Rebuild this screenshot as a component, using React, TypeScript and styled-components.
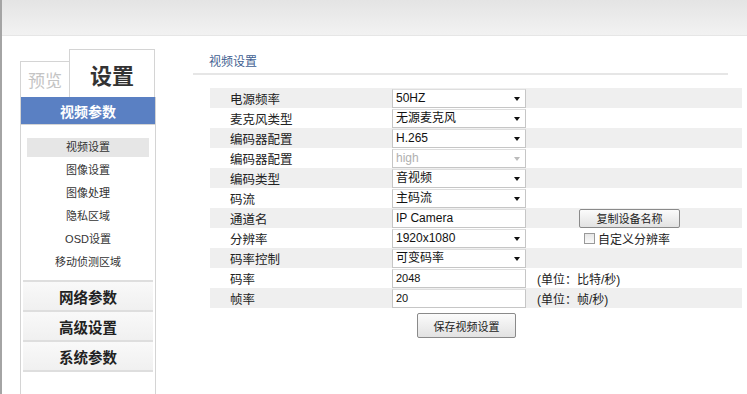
import React from "react";
import styled, { createGlobalStyle } from "styled-components";

const GlobalStyle = createGlobalStyle`
  html, body {
    margin: 0;
    padding: 0;
    background: #ffffff;
    font-family: "Liberation Sans", "Noto Sans CJK SC", sans-serif;
    color: #222;
  }
`;

const Frame = styled.div`
  width: 747px;
  height: 394px;
  box-sizing: border-box;
  border-left: 2px solid #a4a4a4;
  display: flex;
  flex-direction: column;
  overflow: hidden;
`;

const TopBar = styled.div`
  height: 35px;
  flex: none;
  background: linear-gradient(#e4e4e4, #f2f2f2);
  border-bottom: 1px solid #e6e6e6;
`;

const Body = styled.div`
  flex: 1;
  display: flex;
  min-height: 0;
`;

const Sidebar = styled.div`
  margin-left: 18px;
  width: 136px;
  display: flex;
  flex-direction: column;
`;

const TabRow = styled.div`
  height: 61px;
  display: flex;
  align-items: flex-end;
`;

const Tab = styled.div<{ $active?: boolean }>`
  box-sizing: border-box;
  display: flex;
  align-items: center;
  justify-content: center;
  border: 1px solid #d4d4d4;
  border-bottom: none;
  background: #fff;
  width: ${({ $active }) => ($active ? "86px" : "50px")};
  height: ${({ $active }) => ($active ? "48px" : "36px")};
  font-size: ${({ $active }) => ($active ? "22px" : "17px")};
  font-weight: ${({ $active }) => ($active ? "bold" : "normal")};
  color: ${({ $active }) => ($active ? "#333" : "#c4c4c4")};
  ${({ $active }) => ($active ? "margin-left: -1px;" : "")}
`;

const Header = styled.div`
  height: 27px;
  background: #5a80c3;
  color: #fff;
  font-size: 14px;
  font-weight: bold;
  display: flex;
  align-items: center;
  justify-content: center;
  border: 1px solid #d4d4d4;
  border-top: none;
`;

const Menu = styled.div`
  flex: 1;
  border-left: 1px solid #d4d4d4;
  border-right: 1px solid #d4d4d4;
`;

const SubList = styled.div`
  padding: 13px 6px 8px;
  display: flex;
  flex-direction: column;
  gap: 4px;
`;

const SubItem = styled.div<{ $active?: boolean }>`
  height: 19px;
  line-height: 19px;
  text-align: center;
  font-size: 11px;
  color: #333;
  background: ${({ $active }) => ($active ? "#e6e6e6" : "transparent")};
`;

const Groups = styled.div`
  border-top: 2px solid #dedede;
  margin: 0 2px;
`;

const Group = styled.div`
  height: 28px;
  border-bottom: 2px solid #dedede;
  background: linear-gradient(#f9f9f9, #f0f0f0);
  display: flex;
  align-items: center;
  justify-content: center;
  font-size: 14.5px;
  font-weight: bold;
  color: #222;
`;

const Main = styled.div`
  flex: 1;
  margin-left: 37px;
  padding-right: 5px;
`;

const TitleBar = styled.div`
  margin-top: 18px;
  margin-right: 14px;
  padding: 0 0 3px 16px;
  line-height: 16px;
  font-size: 12px;
  color: #3f5f92;
  border-bottom: 2px solid #e6e6e6;
`;

const Table = styled.div`
  margin: 13px 0 0 17px;
`;

const Row = styled.div<{ $shaded?: boolean }>`
  display: grid;
  grid-template-columns: 182px 135px 1fr;
  height: 20px;
  align-items: center;
  background: ${({ $shaded }) => ($shaded ? "#efefef" : "#fff")};
`;

const Label = styled.div`
  padding-left: 20px;
  font-size: 12.5px;
  color: #222;
`;

const Field = styled.div<{ $disabled?: boolean; $small?: boolean }>`
  box-sizing: border-box;
  position: relative;
  width: 134px;
  height: 19px;
  border: 1px solid #c6c6c6;
  border-top-color: #dedede;
  background: #fff;
  padding-left: 3px;
  font-size: ${({ $small }) => ($small ? "11px" : "12px")};
  line-height: 17px;
  color: ${({ $disabled }) => ($disabled ? "#b0b0b0" : "#111")};
`;

const Arrow = styled.span<{ $disabled?: boolean }>`
  position: absolute;
  right: 5px;
  top: 7px;
  width: 0;
  height: 0;
  border-left: 3px solid transparent;
  border-right: 3px solid transparent;
  border-top: 4px solid ${({ $disabled }) => ($disabled ? "#bbb" : "#111")};
`;

const Extra = styled.div<{ $pad?: number }>`
  display: flex;
  align-items: center;
  padding-left: ${({ $pad }) => $pad ?? 0}px;
  font-size: 12px;
  color: #222;
`;

const Button = styled.button<{ $w: number; $h: number }>`
  box-sizing: border-box;
  width: ${({ $w }) => $w}px;
  height: ${({ $h }) => $h}px;
  padding: 0;
  border: 1px solid #8a8a8a;
  border-radius: 2px;
  background: linear-gradient(#fbfbfb, #e2e2e2);
  font-family: inherit;
  font-size: 11px;
  color: #222;
`;

const Check = styled.span`
  box-sizing: border-box;
  width: 11px;
  height: 11px;
  border: 1px solid #999;
  background: linear-gradient(#e6e6e6, #fafafa);
  margin-right: 3px;
`;

const SaveRow = styled.div`
  margin-top: 5px;
  padding-left: 224px;
`;

type RowDef = {
  label: string;
  value: string;
  kind: "select" | "input";
  disabled?: boolean;
  small?: boolean;
  extra?: React.ReactNode;
};

const rows: RowDef[] = [
  { label: "电源频率", value: "50HZ", kind: "select" },
  { label: "麦克风类型", value: "无源麦克风", kind: "select" },
  { label: "编码器配置", value: "H.265", kind: "select" },
  { label: "编码器配置", value: "high", kind: "select", disabled: true },
  { label: "编码类型", value: "音视频", kind: "select" },
  { label: "码流", value: "主码流", kind: "select" },
  {
    label: "通道名",
    value: "IP Camera",
    kind: "input",
    extra: (
      <Extra $pad={52}>
        <Button $w={101} $h={19}>复制设备名称</Button>
      </Extra>
    ),
  },
  {
    label: "分辨率",
    value: "1920x1080",
    kind: "select",
    extra: (
      <Extra $pad={57}>
        <Check />
        自定义分辨率
      </Extra>
    ),
  },
  { label: "码率控制", value: "可变码率", kind: "select" },
  {
    label: "码率",
    value: "2048",
    kind: "input",
    small: true,
    extra: <Extra $pad={10}>(单位：比特/秒)</Extra>,
  },
  {
    label: "帧率",
    value: "20",
    kind: "input",
    small: true,
    extra: <Extra $pad={10}>(单位：帧/秒)</Extra>,
  },
];

const subItems = ["视频设置", "图像设置", "图像处理", "隐私区域", "OSD设置", "移动侦测区域"];
const groups = ["网络参数", "高级设置", "系统参数"];

export default function App() {
  return (
    <>
      <GlobalStyle />
      <Frame>
        <TopBar />
        <Body>
          <Sidebar>
            <TabRow>
              <Tab>预览</Tab>
              <Tab $active>设置</Tab>
            </TabRow>
            <Header>视频参数</Header>
            <Menu>
              <SubList>
                {subItems.map((s, i) => (
                  <SubItem key={s} $active={i === 0}>
                    {s}
                  </SubItem>
                ))}
              </SubList>
              <Groups>
                {groups.map((g) => (
                  <Group key={g}>{g}</Group>
                ))}
              </Groups>
            </Menu>
          </Sidebar>
          <Main>
            <TitleBar>视频设置</TitleBar>
            <Table>
              {rows.map((r, i) => (
                <Row key={i} $shaded={i % 2 === 0}>
                  <Label>{r.label}</Label>
                  <Field $disabled={r.disabled} $small={r.small}>
                    {r.value}
                    {r.kind === "select" && <Arrow $disabled={r.disabled} />}
                  </Field>
                  {r.extra ?? <Extra />}
                </Row>
              ))}
            </Table>
            <SaveRow>
              <Button $w={99} $h={25}>保存视频设置</Button>
            </SaveRow>
          </Main>
        </Body>
      </Frame>
    </>
  );
}
